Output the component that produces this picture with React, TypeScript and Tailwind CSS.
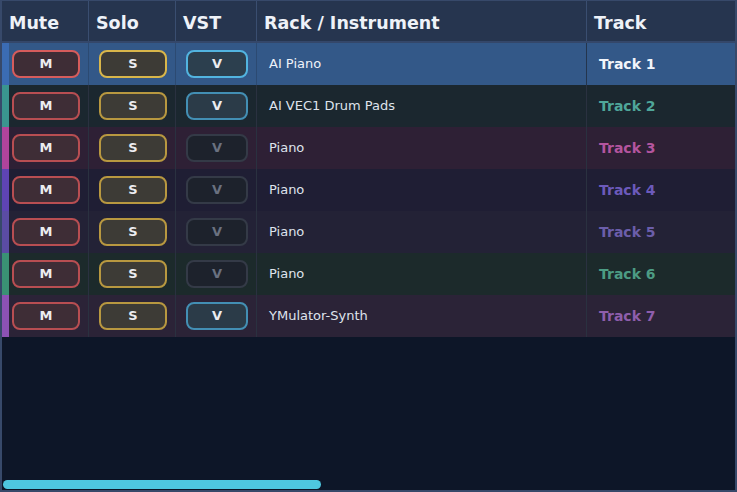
import { Fragment } from 'react'

type Row = {
  name: string
  track: string
  strip: string
  bg: string
  trackColor: string
  vst: boolean
  selected?: boolean
}

const rows: Row[] = [
  { name: 'AI Piano', track: 'Track 1', strip: 'bg-[#3b6cb4]', bg: 'bg-[#335888]', trackColor: 'text-[#f2f5fa]', vst: true, selected: true },
  { name: 'AI VEC1 Drum Pads', track: 'Track 2', strip: 'bg-[#3a958f]', bg: 'bg-[#1b272f]', trackColor: 'text-[#4fa69a]', vst: true },
  { name: 'Piano', track: 'Track 3', strip: 'bg-[#b0449c]', bg: 'bg-[#2e2035]', trackColor: 'text-[#b4559f]', vst: false },
  { name: 'Piano', track: 'Track 4', strip: 'bg-[#5f44b4]', bg: 'bg-[#1f1e34]', trackColor: 'text-[#6c5abb]', vst: false },
  { name: 'Piano', track: 'Track 5', strip: 'bg-[#5b4ca4]', bg: 'bg-[#232236]', trackColor: 'text-[#6b5eaa]', vst: false },
  { name: 'Piano', track: 'Track 6', strip: 'bg-[#3a9274]', bg: 'bg-[#1c2a2b]', trackColor: 'text-[#4c9c84]', vst: false },
  { name: 'YMulator-Synth', track: 'Track 7', strip: 'bg-[#8c52b4]', bg: 'bg-[#2b2337]', trackColor: 'text-[#8e5eac]', vst: true },
]

const font = { fontFamily: '"DejaVu Sans", Verdana, sans-serif' }

export default function App() {
  return (
    <div
      className="flex h-[492px] w-[737px] flex-col border-2 border-t border-[#37496a] bg-[#0d1628]"
      style={font}
    >
      {/* header */}
      <div className="flex h-[42px] shrink-0 border-b-2 border-[#34476a] bg-[#26354f] text-[17.5px] font-bold text-[#eef2f8]">
        <div className="flex w-[87px] items-center border-r border-[#3a4e70] pl-[7px] pt-[4px]">Mute</div>
        <div className="flex w-[87px] items-center border-r border-[#3a4e70] pl-[7px] pt-[4px]">Solo</div>
        <div className="flex w-[81px] items-center border-r border-[#3a4e70] pl-[7px] pt-[4px]">VST</div>
        <div className="flex w-[330px] items-center border-r border-[#3a4e70] pl-[7px] pt-[4px]">Rack / Instrument</div>
        <div className="flex flex-1 items-center pl-[7px] pt-[4px]">Track</div>
      </div>

      {rows.map((r, i) => (
        <Fragment key={i}>
          <div className={`flex h-[42px] shrink-0 ${r.bg}`}>
            <div className={`flex w-[87px] items-center border-r ${r.selected ? 'border-[#2c4a72]' : 'border-[#2a3140]'}`}>
              <div className={`h-full w-[7px] ${r.strip}`} />
              <button
                className={`ml-[3px] flex h-[28px] w-[68px] items-center justify-center rounded-[8px] border-2 bg-[#3e2d36] text-[13px] font-bold text-[#ececf0] ${r.selected ? 'border-[#d65c5c]' : 'border-[#b84e52]'}`}
              >
                M
              </button>
            </div>
            <div className={`flex w-[87px] items-center border-r pl-[10px] ${r.selected ? 'border-[#2c4a72]' : 'border-[#2a3140]'}`}>
              <button
                className={`flex h-[28px] w-[68px] items-center justify-center rounded-[8px] border-2 bg-[#3d3b36] text-[13px] font-bold text-[#ececf0] ${r.selected ? 'border-[#d9b64a]' : 'border-[#b89840]'}`}
              >
                S
              </button>
            </div>
            <div className={`flex w-[81px] items-center border-r pl-[10px] ${r.selected ? 'border-[#2c4a72]' : 'border-[#2a3140]'}`}>
              <button
                className={`flex h-[28px] w-[62px] items-center justify-center rounded-[8px] border-2 text-[13px] font-bold ${
                  r.vst
                    ? r.selected
                      ? 'border-[#52b4e0] bg-[#2c3f4e] text-[#ececf0]'
                      : 'border-[#438fb4] bg-[#2b3b48] text-[#ececf0]'
                    : 'border-[#343a47] bg-[#1d222c] text-[#6a7180]'
                }`}
              >
                V
              </button>
            </div>
            <div
              className={`flex w-[330px] items-center border-r pl-[12px] text-[13px] ${
                r.selected ? 'border-[#24354d] text-[#eef2f8]' : 'border-[#2a3140] text-[#dfe3ec]'
              }`}
            >
              {r.name}
            </div>
            <div className={`flex flex-1 items-center pl-[12px] text-[14px] font-bold ${r.trackColor}`}>{r.track}</div>
          </div>
        </Fragment>
      ))}

      <div className="flex flex-1 items-end pb-px pl-px">
        <div className="h-[9px] w-[318px] rounded-full bg-[#4ec7e0]" />
      </div>
    </div>
  )
}
